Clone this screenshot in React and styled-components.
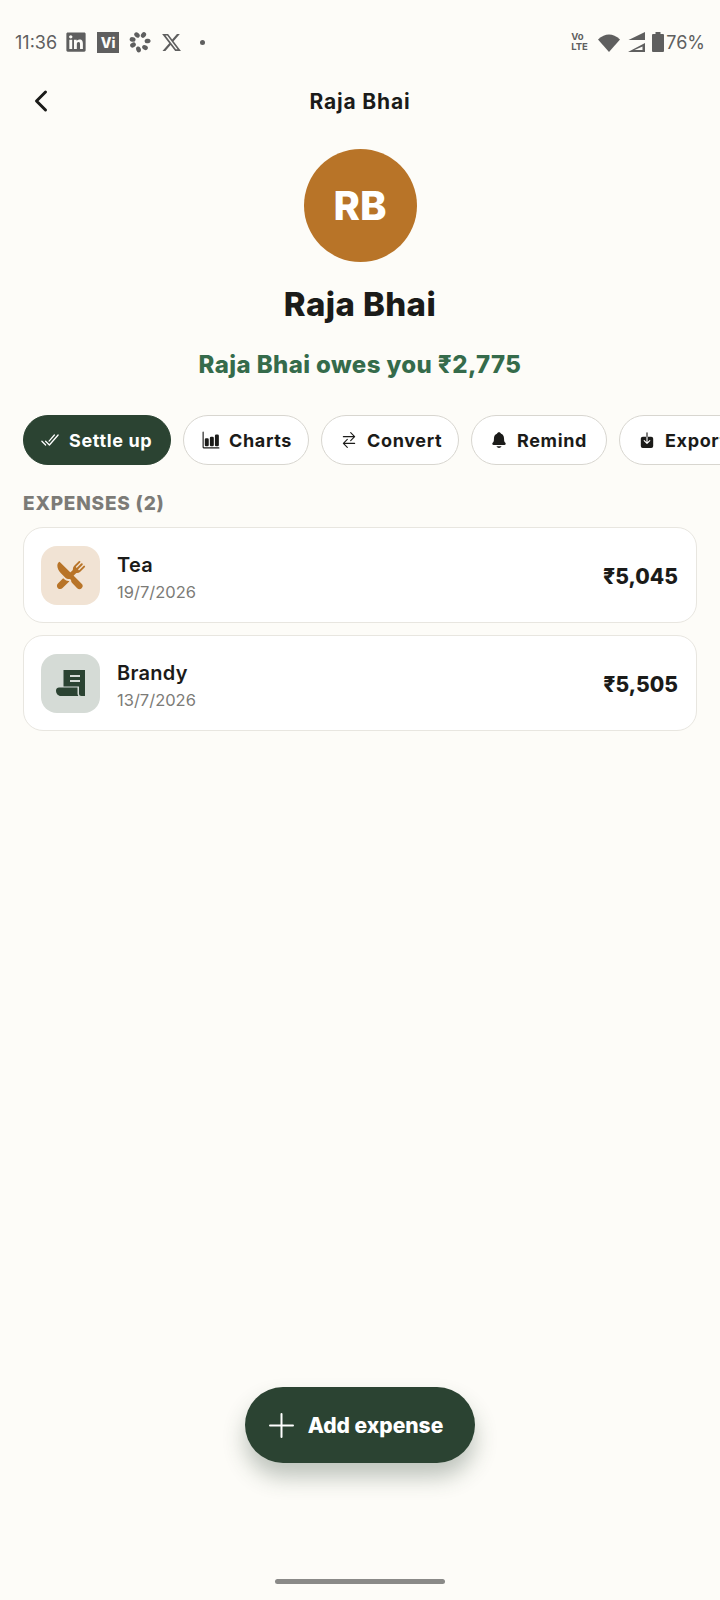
import React from 'react';
import styled, { createGlobalStyle } from 'styled-components';
import {
  IoBarChart,
  IoCheckmarkDoneOutline,
  IoChevronBack,
  IoDownload,
  IoNotifications,
  IoRestaurant,
  IoSwapHorizontal,
} from 'react-icons/io5';
import { FaLinkedin, FaXTwitter } from 'react-icons/fa6';

const GlobalStyle = createGlobalStyle`
  html, body {
    margin: 0;
    padding: 0;
    background: #fdfcf8;
  }
  body {
    font-family: Inter, "Noto Sans", "Liberation Sans", sans-serif;
    color: #1b1b19;
  }
`;

const Page = styled.div`
  width: 720px;
  height: 1600px;
  display: flex;
  flex-direction: column;
  background: #fdfcf8;
  overflow: hidden;
`;

const StatusBar = styled.div`
  height: 24px;
  margin-top: 30px;
  padding: 0 15px;
  display: flex;
  align-items: center;
  justify-content: space-between;
  color: #5f5f5f;
`;

const StatusGroup = styled.div`
  display: flex;
  align-items: center;
  gap: ${(p) => p.$gap || 10}px;
`;

const Clock = styled.span`
  font-size: 18px;
  font-weight: 400;
  margin-right: -2px;
`;

const Percent = styled.span`
  font-size: 18px;
  margin-left: -5px;
`;

const ViBadge = styled.span`
  width: 22px;
  height: 21px;
  background: #5f5f5f;
  color: #fdfcf8;
  display: flex;
  align-items: center;
  justify-content: center;
  font-size: 14px;
  font-weight: 800;
`;

const Dot = styled.span`
  width: 5px;
  height: 5px;
  border-radius: 50%;
  background: #5f5f5f;
  margin-left: 8px;
`;

const Lte = styled.span`
  font-size: 9.5px;
  font-weight: 700;
  line-height: 10px;
  width: 20px;
`;

const Header = styled.div`
  height: 40px;
  margin-top: 27px;
  padding: 0 24px;
  display: flex;
  align-items: center;
  position: relative;
  justify-content: center;
`;

const BackButton = styled.button`
  position: absolute;
  left: 25px;
  top: 4px;
  background: none;
  border: none;
  padding: 0;
  display: flex;
  color: #1b1b19;
`;

const HeaderTitle = styled.div`
  font-size: 21px;
  font-weight: 700;
  letter-spacing: 0.8px;
`;

const Profile = styled.div`
  display: flex;
  flex-direction: column;
  align-items: center;
  margin-top: 28px;
`;

const Avatar = styled.div`
  width: 113px;
  height: 113px;
  border-radius: 50%;
  background: #b87428;
  color: #ffffff;
  display: flex;
  align-items: center;
  justify-content: center;
  font-size: 40px;
  font-weight: 800;
`;

const Name = styled.div`
  font-size: 33px;
  line-height: 40px;
  font-weight: 800;
  letter-spacing: 0.4px;
  margin-top: 22px;
`;

const Balance = styled.div`
  font-size: 24px;
  line-height: 30px;
  font-weight: 800;
  letter-spacing: 0.4px;
  color: #356b4b;
  margin-top: 26px;
`;

const ChipRow = styled.div`
  display: flex;
  gap: 12px;
  margin-top: 35px;
  padding-left: 23px;
  overflow: hidden;
`;

const Chip = styled.div`
  flex: none;
  box-sizing: border-box;
  height: 50px;
  width: ${(p) => p.$width}px;
  border-radius: 25px;
  border: 1px solid ${(p) => (p.$active ? '#2b4332' : '#d8d6d0')};
  background: ${(p) => (p.$active ? '#2b4332' : '#ffffff')};
  color: ${(p) => (p.$active ? '#ffffff' : '#1b1b19')};
  display: flex;
  align-items: center;
  gap: 9px;
  padding-left: ${(p) => p.$pad}px;
  font-size: 18px;
  font-weight: 700;
  letter-spacing: 0.65px;
  white-space: nowrap;
`;

const SectionLabel = styled.div`
  font-size: 19px;
  line-height: 24px;
  font-weight: 800;
  letter-spacing: 0.8px;
  color: #7c7b77;
  margin: 27px 0 0 23px;
`;

const ExpenseList = styled.div`
  display: flex;
  flex-direction: column;
  gap: 12px;
  margin: 11px 23px 0;
  flex: 1;
`;

const ExpenseCard = styled.div`
  box-sizing: border-box;
  height: 96px;
  border-radius: 20px;
  border: 1px solid #e8e6e0;
  background: #ffffff;
  display: flex;
  align-items: center;
  padding: 0 18px 0 17px;
`;

const IconTile = styled.div`
  width: 59px;
  height: 59px;
  border-radius: 16px;
  background: ${(p) => p.$bg};
  color: ${(p) => p.$fg};
  display: flex;
  align-items: center;
  justify-content: center;
  flex: none;
`;

const ExpenseText = styled.div`
  margin-left: 17px;
  padding-top: 4px;
  flex: 1;
`;

const ExpenseName = styled.div`
  font-size: 20px;
  line-height: 26px;
  font-weight: 600;
  letter-spacing: 0.3px;
`;

const ExpenseDate = styled.div`
  font-size: 16.5px;
  line-height: 22px;
  margin-top: 3px;
  color: #7c7b77;
`;

const Amount = styled.div`
  font-size: 21px;
  font-weight: 800;
  padding-top: 2px;
`;

const FabRow = styled.div`
  display: flex;
  justify-content: center;
`;

const Fab = styled.button`
  width: 230px;
  height: 76px;
  border: none;
  border-radius: 38px;
  background: #2b4332;
  color: #ffffff;
  font-family: inherit;
  font-size: 21px;
  font-weight: 800;
  display: flex;
  align-items: center;
  justify-content: center;
  gap: 14px;
  padding: 0 8px 0 0;
  box-shadow: 0 14px 22px rgba(43, 67, 50, 0.3);
`;

const HomeBar = styled.div`
  width: 170px;
  height: 5px;
  border-radius: 3px;
  background: #8a8a88;
  margin: 116px auto 16px;
`;

const SpinnerIcon = () => (
  <svg width="22" height="22" viewBox="0 0 22 22" fill="#5f5f5f">
    <ellipse cx="8" cy="4" rx="3" ry="2.3" transform="rotate(40 8 4)" />
    <ellipse cx="14.5" cy="4" rx="3" ry="2.3" transform="rotate(-50 14.5 4)" />
    <ellipse cx="18.6" cy="10" rx="3" ry="2.3" transform="rotate(-10 18.6 10)" />
    <ellipse cx="16" cy="16.6" rx="3" ry="2.3" transform="rotate(30 16 16.6)" />
    <ellipse cx="9.5" cy="18.4" rx="3" ry="2.3" transform="rotate(70 9.5 18.4)" />
    <ellipse cx="4" cy="14" rx="3" ry="2.3" transform="rotate(-30 4 14)" />
    <ellipse cx="3.6" cy="8.4" rx="3" ry="2.3" transform="rotate(10 3.6 8.4)" />
  </svg>
);

const WifiIcon = () => (
  <svg width="22" height="19" viewBox="0 0 22 19" fill="#5f5f5f">
    <path d="M0 6.5Q11-3.5 22 6.5L11 19z" />
  </svg>
);

const SignalIcon = () => (
  <svg width="18" height="20" viewBox="0 0 18 20" fill="#5f5f5f">
    <path d="M18 0v8H1.5z" />
    <path d="M18 11v9H1zM15.5 14.5 7.5 18h8z" fillRule="evenodd" />
  </svg>
);

const BatteryIcon = () => (
  <svg width="12" height="20" viewBox="0 0 12 20" fill="#5f5f5f">
    <path d="M3.5 0h5v2H11a1 1 0 0 1 1 1v16a1 1 0 0 1-1 1H1a1 1 0 0 1-1-1V3a1 1 0 0 1 1-1h2.5z" />
  </svg>
);

const PlusIcon = () => (
  <svg width="25" height="25" viewBox="0 0 25 25" stroke="#ffffff" strokeWidth="2" strokeLinecap="round">
    <path d="M12.5 1v23M1 12.5h23" />
  </svg>
);

const ReceiptIcon = () => (
  <svg width="29" height="26" viewBox="0 0 29 26">
    <path fill="#2b4332" d="M7.5 0H29v26h-3.5a2.5 2.5 0 0 1-2.5-2.5V16.5H7.5z" />
    <path fill="#2b4332" d="M0 20.5C0 18.5 1.500 17.500 3 17.500H21.500v6c0 1 .3 1.800.8 2.500H5c-3 0-5-2.500-5-5.500z" />
    <path stroke="#d5dbd6" strokeWidth="2" d="M14 6h10M14 11h10" />
  </svg>
);

const expenses = [
  { name: 'Tea', date: '19/7/2026', amount: '₹5,045', bg: '#f1e3d4', fg: '#b87428', icon: <IoRestaurant size={30} /> },
  { name: 'Brandy', date: '13/7/2026', amount: '₹5,505', bg: '#d5dbd6', fg: '#2b4332', icon: <ReceiptIcon /> },
];

const chips = [
  { label: 'Settle up', Icon: IoCheckmarkDoneOutline, width: 148, pad: 16, active: true, size: 20 },
  { label: 'Charts', Icon: IoBarChart, width: 126, pad: 18, size: 18 },
  { label: 'Convert', Icon: IoSwapHorizontal, width: 138, pad: 18, size: 18 },
  { label: 'Remind', Icon: IoNotifications, width: 136, pad: 18, size: 18 },
  { label: 'Export', Icon: IoDownload, width: 130, pad: 18, size: 18 },
];

function App() {
  return (
    <Page>
      <GlobalStyle />
      <StatusBar>
        <StatusGroup $gap={10}>
          <Clock>11:36</Clock>
          <FaLinkedin size={22} />
          <ViBadge>Vi</ViBadge>
          <SpinnerIcon />
          <FaXTwitter size={21} />
          <Dot />
        </StatusGroup>
        <StatusGroup $gap={7}>
          <Lte>Vo<br />LTE</Lte>
          <WifiIcon />
          <SignalIcon />
          <BatteryIcon />
          <Percent>76%</Percent>
        </StatusGroup>
      </StatusBar>

      <Header>
        <BackButton><IoChevronBack size={32} /></BackButton>
        <HeaderTitle>Raja Bhai</HeaderTitle>
      </Header>

      <Profile>
        <Avatar>RB</Avatar>
        <Name>Raja Bhai</Name>
        <Balance>Raja Bhai owes you ₹2,775</Balance>
      </Profile>

      <ChipRow>
        {chips.map(({ label, Icon, width, pad, active, size }) => (
          <Chip key={label} $width={width} $pad={pad} $active={active}>
            <Icon size={size} />
            {label}
          </Chip>
        ))}
      </ChipRow>

      <SectionLabel>EXPENSES (2)</SectionLabel>

      <ExpenseList>
        {expenses.map(({ name, date, amount, bg, fg, icon }) => (
          <ExpenseCard key={name}>
            <IconTile $bg={bg} $fg={fg}>{icon}</IconTile>
            <ExpenseText>
              <ExpenseName>{name}</ExpenseName>
              <ExpenseDate>{date}</ExpenseDate>
            </ExpenseText>
            <Amount>{amount}</Amount>
          </ExpenseCard>
        ))}
      </ExpenseList>

      <FabRow>
        <Fab><PlusIcon />Add expense</Fab>
      </FabRow>
      <HomeBar />
    </Page>
  );
}

export default App;
